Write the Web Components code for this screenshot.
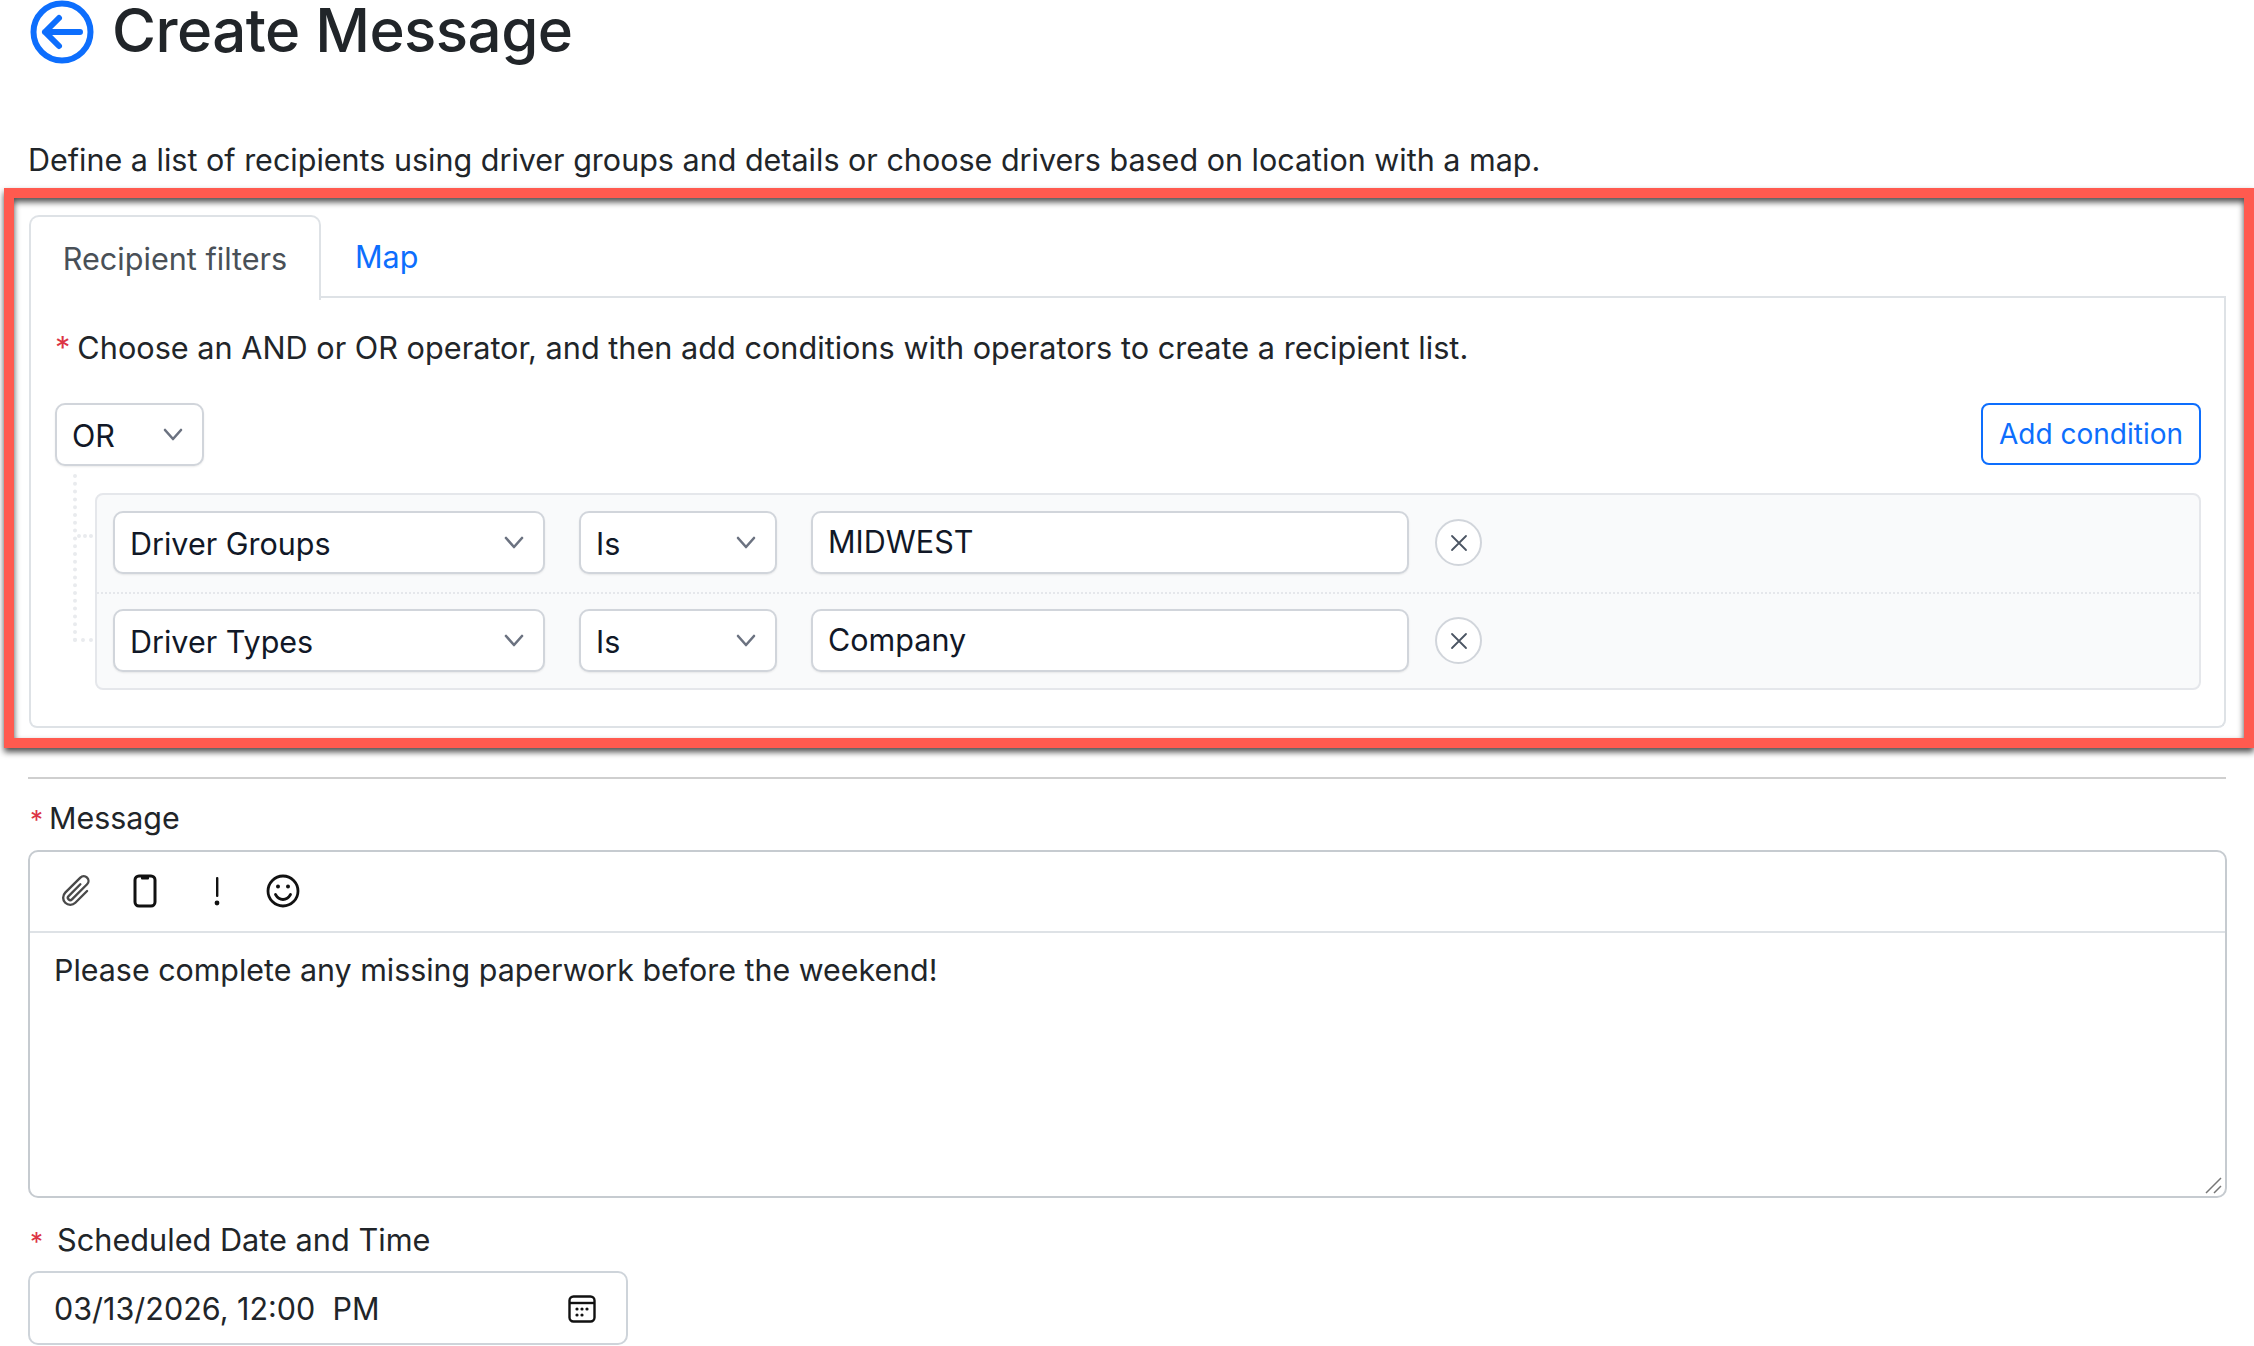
<!DOCTYPE html>
<html lang="en">
<head>
<meta charset="utf-8">
<title>Create Message</title>
<style>
  html, body { margin: 0; height: 1346px; overflow: hidden; background: #fff; }
  body { font-family: Inter, "Liberation Sans", sans-serif; color: #212529; }
</style>
</head>
<body>
<create-message-page>
  <page-header slot="header" label="Create Message"></page-header>
  <annotation-frame slot="recipients">
    <recipient-tabs>
      <filter-builder></filter-builder>
    </recipient-tabs>
  </annotation-frame>
  <message-editor slot="message">Please complete any missing paperwork before the weekend!</message-editor>
  <date-field slot="schedule" label="Scheduled Date and Time" value="03/13/2026, 12:00  PM"></date-field>
</create-message-page>

<script>
class CreateMessagePage extends HTMLElement {
    constructor() {
        super();
        this.shadow = this.attachShadow({ mode: 'open' });
    }

    connectedCallback() {
        this.render();
    }

    render() {
        this.shadow.innerHTML = /*html*/ `
            <style>
                :host { display: block; }
                .intro {
                    margin: 0;
                    padding: 0 0 0 28px;
                    height: 40px;
                    font-size: 30.5px;
                    line-height: 40px;
                }
                .recipients { padding: 8px 0 0 4px; }
                hr {
                    margin: 29px 28px 0 28px;
                    border: 0;
                    border-top: 2px solid #cfcfcf;
                }
            </style>
            <slot name="header"></slot>
            <p class="intro">Define a list of recipients using driver groups and details or choose drivers based on location with a map.</p>
            <div class="recipients"><slot name="recipients"></slot></div>
            <hr>
            <slot name="message"></slot>
            <slot name="schedule"></slot>
        `;
    }
}

class PageHeader extends HTMLElement {
    constructor() {
        super();
        this.shadow = this.attachShadow({ mode: 'open' });
    }

    connectedCallback() {
        this.render();
    }

    render() {
        this.shadow.innerHTML = /*html*/ `
            <style>
                :host {
                    display: flex;
                    gap: 18px;
                    height: 140px;
                    padding: 0 0 0 30px;
                    box-sizing: border-box;
                    align-items: flex-start;
                }
                svg { flex: none; display: block; }
                h1 {
                    margin: 0;
                    font-size: 60px;
                    line-height: 60px;
                    font-weight: 500;
                    letter-spacing: -.55px;
                    color: #212529;
                }
            </style>
            <svg width="64" height="64" viewBox="0 0 64 64" fill="none" stroke="#0d6efd" stroke-linecap="round" stroke-linejoin="round">
                <circle cx="32" cy="32" r="28.5" stroke-width="6"/>
                <path d="M29 18 15 32l14 14M15 32h35" stroke-width="6"/>
            </svg>
            <h1>${this.getAttribute('label')}</h1>
        `;
    }
}

class AnnotationFrame extends HTMLElement {
    constructor() {
        super();
        this.shadow = this.attachShadow({ mode: 'open' });
    }

    connectedCallback() {
        this.render();
    }

    render() {
        this.shadow.innerHTML = /*html*/ `
            <style>
                :host { display: block; position: relative; }
                .content { padding: 27px 28px 20px 25px; }
                .stroke {
                    position: absolute;
                    inset: 0;
                    border: 10px solid #ff5a4f;
                    filter: drop-shadow(0 4px 3px rgba(0, 0, 0, .7));
                    pointer-events: none;
                }
            </style>
            <div class="content"><slot></slot></div>
            <div class="stroke"></div>
        `;
    }
}

class RecipientTabs extends HTMLElement {
    constructor() {
        super();
        this.shadow = this.attachShadow({ mode: 'open' });
    }

    connectedCallback() {
        this.render();
    }

    render() {
        this.shadow.innerHTML = /*html*/ `
            <style>
                :host { display: block; font-size: 30.6px; }
                .tabs { display: flex; height: 83px; box-sizing: border-box; border-bottom: 2px solid #dee2e6; }
                .tab {
                    display: flex;
                    align-items: center;
                    height: 83px;
                    box-sizing: border-box;
                }
                .active {
                    width: 292px;
                    justify-content: center;
                    color: #495057;
                    border: 2px solid #dee2e6;
                    border-bottom: 0;
                    border-radius: 10px 10px 0 0;
                    background: #fff;
                    margin-bottom: -2px;
                    height: 85px;
                }
                .link { color: #0d6efd; padding: 0 34px; font-size: 30.5px; }
                .panel {
                    border: 2px solid #dee2e6;
                    border-top: 0;
                    border-radius: 0 0 8px 8px;
                }
            </style>
            <div class="tabs">
                <div class="tab active">Recipient filters</div>
                <div class="tab link">Map</div>
            </div>
            <div class="panel"><slot></slot></div>
        `;
    }
}

class FilterBuilder extends HTMLElement {
    constructor() {
        super();
        this.shadow = this.attachShadow({ mode: 'open' });
    }

    connectedCallback() {
        this.render();
    }

    render() {
        this.shadow.innerHTML = /*html*/ `
            <style>
                :host { display: block; padding: 26px 23px 36px 24px; font-size: 30.66px; }
                .hint { height: 52px; line-height: 48px; color: #212529; white-space: nowrap; }
                .hint span { color: #dc3545; margin-right: 7px; }
                .top { display: flex; justify-content: space-between; margin-top: 27px; }
                button {
                    height: 62px;
                    width: 220px;
                    padding: 0;
                    background: #fff;
                    border: 2px solid #0d6efd;
                    border-radius: 8px;
                    color: #0d6efd;
                    font: inherit;
                    font-size: 28px;
                }
                .group { position: relative; margin-top: 27px; padding-left: 40px; }
                .rows {
                    background: #f9fafb;
                    border: 2px solid #e5e7eb;
                    border-radius: 8px;
                }
                .rows condition-row:first-child { padding-bottom: 18px; }
                .rows condition-row + condition-row {
                    padding-top: 15px;
                    border-top: 2px dotted #e5e7eb;
                }
                .tree {
                    position: absolute;
                    left: 18px;
                    top: -19px;
                    width: 20px;
                    height: 168px;
                    border-left: 4px dotted #e9ebee;
                    border-bottom: 4px dotted #e9ebee;
                    box-sizing: border-box;
                }
                .tree::before {
                    content: "";
                    position: absolute;
                    left: 0;
                    top: 60px;
                    width: 16px;
                    border-top: 4px dotted #e9ebee;
                }
            </style>
            <div class="hint"><span>*</span>Choose an AND or OR operator, and then add conditions with operators to create a recipient list.</div>
            <div class="top">
                <select-box width="149">OR</select-box>
                <button>Add condition</button>
            </div>
            <div class="group">
                <div class="tree"></div>
                <div class="rows">
                    <condition-row field="Driver Groups" value="MIDWEST"></condition-row>
                    <condition-row field="Driver Types" value="Company"></condition-row>
                </div>
            </div>
        `;
    }
}

class SelectBox extends HTMLElement {
    constructor() {
        super();
        this.shadow = this.attachShadow({ mode: 'open' });
    }

    connectedCallback() {
        this.render();
    }

    render() {
        const width = this.getAttribute('width');
        this.shadow.innerHTML = /*html*/ `
            <style>
                :host {
                    display: flex;
                    flex: none;
                    align-items: center;
                    justify-content: space-between;
                    width: ${width}px;
                    height: 63px;
                    box-sizing: border-box;
                    padding: 1px 19px 0 15px;
                    background: #fff;
                    border: 2px solid #d1d5db;
                    border-radius: 10px;
                    box-shadow: 0 1px 2px rgba(0, 0, 0, .08);
                    color: #111827;
                    font-size: 30.5px;
                }
                svg { flex: none; display: block; margin-top: -2px; }
            </style>
            <slot></slot>
            <svg width="20" height="13" viewBox="0 0 20 13" fill="none" stroke="#6b7280" stroke-width="2.6" stroke-linecap="round" stroke-linejoin="round">
                <path d="M2 2l8 9 8-9"/>
            </svg>
        `;
    }
}

class ConditionRow extends HTMLElement {
    constructor() {
        super();
        this.shadow = this.attachShadow({ mode: 'open' });
    }

    connectedCallback() {
        this.render();
    }

    render() {
        this.shadow.innerHTML = /*html*/ `
            <style>
                :host { display: flex; align-items: center; padding: 16px; }
                .value {
                    width: 598px;
                    height: 63px;
                    box-sizing: border-box;
                    margin-left: 34px;
                    padding: 0 0 2px 15px;
                    display: flex;
                    align-items: center;
                    background: #fff;
                    border: 2px solid #d1d5db;
                    border-radius: 10px;
                    box-shadow: 0 1px 2px rgba(0, 0, 0, .08);
                    color: #111827;
                    font-size: 30.5px;
                }
                .is { margin-left: 34px; }
                .remove {
                    width: 47px;
                    height: 47px;
                    margin-left: 26px;
                    box-sizing: border-box;
                    display: flex;
                    align-items: center;
                    justify-content: center;
                    border: 2px solid #d1d5db;
                    border-radius: 50%;
                    background: #fff;
                }
            </style>
            <select-box width="432">${this.getAttribute('field')}</select-box>
            <select-box class="is" width="198">Is</select-box>
            <div class="value">${this.getAttribute('value')}</div>
            <div class="remove">
                <svg width="20" height="20" viewBox="0 0 20 20" fill="none" stroke="#4b5563" stroke-width="1.8" stroke-linecap="round">
                    <path d="M3 3l14 14M17 3 3 17"/>
                </svg>
            </div>
        `;
    }
}

class MessageEditor extends HTMLElement {
    constructor() {
        super();
        this.shadow = this.attachShadow({ mode: 'open' });
    }

    connectedCallback() {
        this.render();
    }

    render() {
        this.shadow.innerHTML = /*html*/ `
            <style>
                :host { display: block; padding: 0 27px 0 28px; font-size: 30.4px; }
                .label { height: 71px; line-height: 78px; white-space: nowrap; }
                .label span { color: #dc3545; font-size: 26px; margin: 0 6px 0 2px; }
                .box {
                    position: relative;
                    height: 348px;
                    box-sizing: border-box;
                    border: 2px solid #c6cbd0;
                    border-radius: 10px;
                }
                .tools {
                    display: flex;
                    align-items: center;
                    height: 81px;
                    box-sizing: border-box;
                    padding: 0 0 1px 28px;
                    border-bottom: 2px solid #dee2e6;
                }
                .tools svg { display: block; flex: none; }
                .text { padding: 15px 24px; line-height: 44px; color: #212529; }
                .grip { position: absolute; right: 2px; bottom: 2px; display: block; }
            </style>
            <div class="label"><span>*</span>Message</div>
            <div class="box">
                <div class="tools">
                    <svg width="38" height="38" viewBox="0 0 16 16" fill="#4a4a4a" style="transform: rotate(45deg)">
                        <path d="M4.5 3a2.5 2.5 0 0 1 5 0v9a1.5 1.5 0 0 1-3 0V5a.5.5 0 0 1 1 0v7a.5.5 0 0 0 1 0V3a1.5 1.5 0 1 0-3 0v9a2.5 2.5 0 0 0 5 0V5a.5.5 0 0 1 1 0v7a3.5 3.5 0 1 1-7 0V3z"/>
                    </svg>
                    <svg style="margin-left: 37px" width="24" height="34" viewBox="0 0 24 34" fill="none" stroke="#111" stroke-width="3">
                        <rect x="2" y="2" width="20" height="30" rx="4"/>
                        <path d="M8 3h8v1.5a1 1 0 0 1-1 1H9a1 1 0 0 1-1-1z" fill="#111" stroke="none"/>
                    </svg>
                    <svg style="margin-left: 56px" width="8" height="32" viewBox="0 0 8 32" fill="#111">
                        <rect x="3" y="2" width="2.4" height="20" rx="1"/>
                        <circle cx="4" cy="28" r="2.4"/>
                    </svg>
                    <svg style="margin-left: 45px" width="34" height="34" viewBox="0 0 34 34" fill="none" stroke="#111" stroke-width="2.8" stroke-linecap="round">
                        <circle cx="17" cy="17" r="15"/>
                        <path d="M9.5 20.5c2 3.500 4.7 5 7.5 5s5.5-1.5 7.5-5"/>
                        <circle cx="12" cy="12.5" r="2" fill="#111" stroke="none"/>
                        <circle cx="22" cy="12.5" r="2" fill="#111" stroke="none"/>
                    </svg>
                </div>
                <div class="text"><slot></slot></div>
                <svg class="grip" width="18" height="18" viewBox="0 0 18 18" stroke="#777" stroke-width="1.5" fill="none">
                    <path d="M1 17 16 2M9 17l7-7"/>
                </svg>
            </div>
        `;
    }
}

class DateField extends HTMLElement {
    constructor() {
        super();
        this.shadow = this.attachShadow({ mode: 'open' });
    }

    connectedCallback() {
        this.render();
    }

    render() {
        this.shadow.innerHTML = /*html*/ `
            <style>
                :host { display: block; padding: 0 0 0 28px; font-size: 30.5px; }
                .label { height: 73px; line-height: 83px; white-space: nowrap; font-size: 30.7px; }
                .label span { color: #dc3545; font-size: 26px; margin: 0 14px 0 2px; }
                .box {
                    display: flex;
                    align-items: center;
                    justify-content: space-between;
                    width: 600px;
                    height: 74px;
                    box-sizing: border-box;
                    padding: 1px 30px 0 24px;
                    border: 2px solid #ced4da;
                    border-radius: 10px;
                    white-space: pre;
                }
                svg { display: block; flex: none; }
            </style>
            <div class="label"><span>*</span>${this.getAttribute('label')}</div>
            <div class="box">
                <span>${this.getAttribute('value')}</span>
                <svg width="28" height="28" viewBox="0 0 28 28" fill="none" stroke="#111" stroke-width="2.4">
                    <rect x="1.5" y="1.5" width="25" height="25" rx="4"/>
                    <path d="M1.5 8h25"/>
                    <g fill="#111" stroke="none">
                        <circle cx="9" cy="14" r="1.6"/><circle cx="14" cy="14" r="1.6"/><circle cx="19" cy="14" r="1.6"/>
                        <circle cx="9" cy="20" r="1.6"/><circle cx="14" cy="20" r="1.6"/>
                    </g>
                </svg>
            </div>
        `;
    }
}

customElements.define('create-message-page', CreateMessagePage);
customElements.define('page-header', PageHeader);
customElements.define('annotation-frame', AnnotationFrame);
customElements.define('recipient-tabs', RecipientTabs);
customElements.define('filter-builder', FilterBuilder);
customElements.define('select-box', SelectBox);
customElements.define('condition-row', ConditionRow);
customElements.define('message-editor', MessageEditor);
customElements.define('date-field', DateField);
</script>
</body>
</html>
